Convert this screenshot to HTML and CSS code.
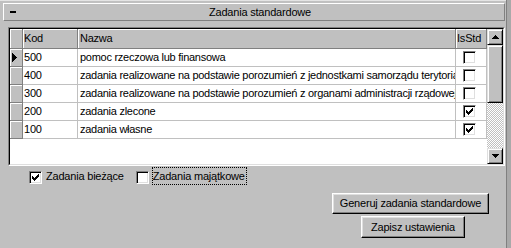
FILE: index.html
```html
<!DOCTYPE html>
<html lang="pl">
<head>
<meta charset="utf-8">
<title>Zadania standardowe</title>
<link rel="stylesheet" href="styles.css">
</head>
<body>
<div class="window">
  <div class="panel">
    <div class="titlebar">
      <span class="collapse"></span>
      <span class="title">Zadania standardowe</span>
    </div>
    <div class="grid">
      <div class="grid-inner">
        <div class="table">
          <div class="row head">
            <div class="c ind"></div>
            <div class="c kod">Kod</div>
            <div class="c naz">Nazwa</div>
            <div class="c std">IsStd</div>
          </div>
          <div class="row">
            <div class="c ind"><svg class="ptr" width="5" height="9" viewBox="0 0 5 9"><path d="M0 0h1v9h-1zM1 1h1v7h-1zM2 2h1v5h-1zM3 3h1v3h-1zM4 4h1v1h-1z"/></svg></div>
            <div class="c kod">500</div>
            <div class="c naz">pomoc rzeczowa lub finansowa</div>
            <div class="c std"><span class="cb"></span></div>
          </div>
          <div class="row">
            <div class="c ind"></div>
            <div class="c kod">400</div>
            <div class="c naz">zadania realizowane na podstawie porozumień z jednostkami samorządu terytorialnego</div>
            <div class="c std"><span class="cb"></span></div>
          </div>
          <div class="row">
            <div class="c ind"></div>
            <div class="c kod">300</div>
            <div class="c naz">zadania realizowane na podstawie porozumień z organami administracji rządowej</div>
            <div class="c std"><span class="cb"></span></div>
          </div>
          <div class="row">
            <div class="c ind"></div>
            <div class="c kod">200</div>
            <div class="c naz">zadania zlecone</div>
            <div class="c std"><span class="cb"><svg class="chk" width="7" height="7" viewBox="0 0 7 7"><path d="M0 2h1v3h-1zM1 3h1v3h-1zM2 4h1v3h-1zM3 3h1v3h-1zM4 2h1v3h-1zM5 1h1v3h-1zM6 0h1v3h-1z"/></svg></span></div>
          </div>
          <div class="row">
            <div class="c ind"></div>
            <div class="c kod">100</div>
            <div class="c naz">zadania własne</div>
            <div class="c std"><span class="cb"><svg class="chk" width="7" height="7" viewBox="0 0 7 7"><path d="M0 2h1v3h-1zM1 3h1v3h-1zM2 4h1v3h-1zM3 3h1v3h-1zM4 2h1v3h-1zM5 1h1v3h-1zM6 0h1v3h-1z"/></svg></span></div>
          </div>
        </div>
        <div class="scroll">
          <div class="sbtn"><svg width="7" height="4" viewBox="0 0 7 4"><path d="M3 0h1v1h-1zM2 1h3v1h-3zM1 2h5v1h-5zM0 3h7v1h-7z"/></svg></div>
          <div class="thumb"></div>
          <div class="track"></div>
          <div class="sbtn"><svg width="7" height="4" viewBox="0 0 7 4"><path d="M0 0h7v1h-7zM1 1h5v1h-5zM2 2h3v1h-3zM3 3h1v1h-1z"/></svg></div>
        </div>
      </div>
    </div>
    <div class="options">
      <div class="opt first">
        <span class="cb"><svg class="chk" width="7" height="7" viewBox="0 0 7 7"><path d="M0 2h1v3h-1zM1 3h1v3h-1zM2 4h1v3h-1zM3 3h1v3h-1zM4 2h1v3h-1zM5 1h1v3h-1zM6 0h1v3h-1z"/></svg></span>
        <span class="lbl">Zadania bieżące</span>
      </div>
      <div class="opt second">
        <span class="cb"></span>
        <span class="lbl focus">Zadania majątkowe</span>
      </div>
    </div>
    <div class="actions">
      <button class="btn btn-gen" type="button">Generuj zadania standardowe</button>
      <button class="btn btn-save" type="button">Zapisz ustawienia</button>
    </div>
  </div>
  <div class="edge"></div>
</div>
</body>
</html>
```
FILE: styles.css
```css
* { box-sizing: border-box; }
html, body { margin: 0; padding: 0; }
body {
  width: 511px;
  height: 248px;
  overflow: hidden;
  background: #c0c0c0;
  color: #000;
  font-family: "Liberation Sans", Arial, sans-serif;
  font-size: 11px;
  letter-spacing: -0.2px;
}
.window { display: flex; height: 248px; }
.panel { width: 506px; border-top: 1px solid #e4e4e4; padding-top: 2px; }
.edge { width: 5px; border-left: 1px solid #808080; background: #a9a9a9; }

.titlebar {
  display: flex;
  align-items: center;
  width: 502px;
  height: 18px;
  margin-left: 3px;
  border: 1px solid;
  border-color: #fff #808080 #808080 #fff;
}
.collapse { flex: none; width: 6px; height: 2px; margin-left: 6px; background: #000; }
.title { flex: 1; text-align: center; line-height: 16px; }

.grid {
  width: 497px;
  height: 139px;
  margin: 6px 0 0 8px;
  border: 1px solid;
  border-color: #808080 #fff #fff #808080;
}
.grid-inner {
  display: flex;
  height: 100%;
  border: 1px solid;
  border-color: #000 #dfdfdf #dfdfdf #000;
  background: #fff;
}
.table { width: 477px; }
.row { display: flex; height: 18px; }
.row.head { height: 20px; }
.c {
  flex: none;
  overflow: hidden;
  white-space: nowrap;
  line-height: 17px;
  border-right: 1px solid #c0c0c0;
  border-bottom: 1px solid #c0c0c0;
}
.ind { width: 13px; background: #c0c0c0; border-color: #808080; box-shadow: inset 1px 1px 0 #fff; display: flex; align-items: center; padding-left: 2px; }
.kod { width: 55px; padding-left: 1px; }
.naz { width: 378px; padding-left: 2px; letter-spacing: -0.27px; }
.std { width: 31px; padding-left: 7px; display: flex; align-items: center; }
.head .c { background: #c0c0c0; border-color: #808080; box-shadow: inset 1px 1px 0 #fff; line-height: 19px; }
.head .std { display: block; padding-left: 1px; }
.ptr { display: block; fill: #000; }

.cb {
  flex: none;
  display: block;
  width: 13px;
  height: 13px;
  padding: 2px;
  border: 1px solid;
  border-color: #808080 #fff #fff #808080;
  box-shadow: inset 1px 1px 0 #000, inset -1px -1px 0 #dfdfdf;
  background: #fff;
}
.chk { display: block; fill: #000; }

.scroll { width: 16px; display: flex; flex-direction: column; }
.sbtn, .thumb {
  flex: none;
  border: 1px solid;
  border-color: #dfdfdf #000 #000 #dfdfdf;
  box-shadow: inset 1px 1px 0 #fff, inset -1px -1px 0 #808080;
  background: #c0c0c0;
}
.sbtn { height: 16px; display: flex; align-items: center; justify-content: center; }
.sbtn svg { display: block; fill: #000; }
.thumb { height: 58px; }
.track {
  flex: 1;
  background: repeating-conic-gradient(#c0c0c0 0 25%, #fff 0 50%) 0 0 / 2px 2px;
}

.options { display: flex; height: 18px; margin-top: 1px; }
.opt { display: flex; align-items: flex-start; }
.opt .cb { margin-top: 4px; }
.opt.first { margin-left: 29px; }
.opt.second { margin-left: 10px; }
.lbl {
  margin-left: 3px;
  line-height: 16px;
  border: 1px solid transparent;
  padding-right: 1px;
  white-space: nowrap;
}
.lbl.focus { border: 1px dotted #000; }

.actions {
  display: flex;
  flex-direction: column;
  align-items: flex-start;
  gap: 2px;
  margin: 8px 0 0 332px;
}
.btn {
  appearance: none;
  margin: 0;
  padding: 0;
  height: 21px;
  font: inherit;
  letter-spacing: inherit;
  color: #000;
  text-align: center;
  line-height: 19px;
  background: #c0c0c0;
  border: 1px solid;
  border-color: #fff #000 #000 #fff;
  box-shadow: inset -1px -1px 0 #808080, inset 1px 1px 0 #dfdfdf;
  border-radius: 0;
}
.btn-gen { width: 157px; }
.btn-save { width: 104px; height: 22px; margin-left: 29px; }
```
